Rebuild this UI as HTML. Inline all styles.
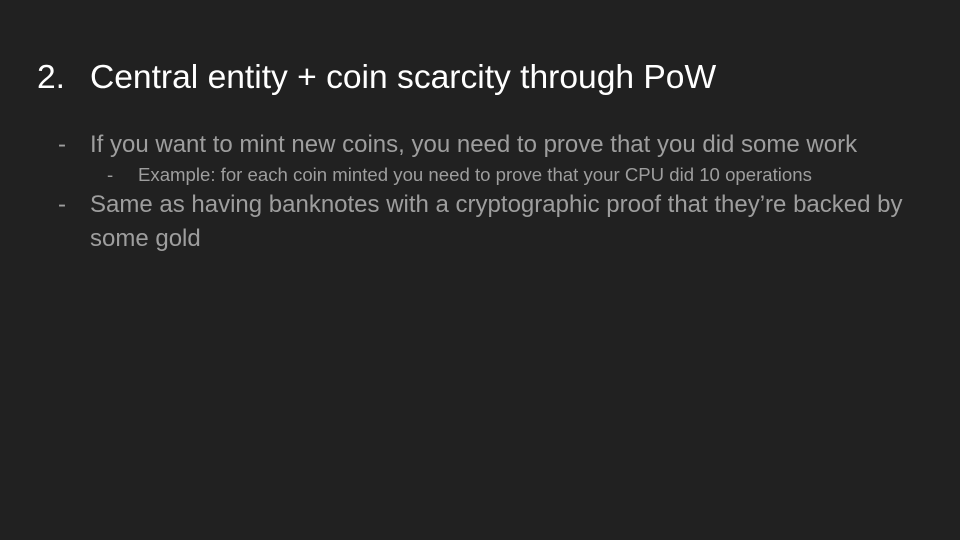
<!DOCTYPE html>
<html><head><style>
body{margin:0;width:960px;height:540px;background:#212121;font-family:"Liberation Sans",sans-serif;position:relative;overflow:hidden}
div{position:absolute;white-space:nowrap}
.t{color:#fff;font-size:33.6px}
.b{color:#9e9e9e;font-size:24px}
.s{color:#9e9e9e;font-size:18.6px}
</style></head><body>
<div class="t" style="left:37px;top:59px">2.</div>
<div class="t" style="left:90px;top:59px">Central entity + coin scarcity through PoW</div>
<div class="b" style="left:58px;top:131px">-</div>
<div class="b" style="left:90px;top:131px">If you want to mint new coins, you need to prove that you did some work</div>
<div class="s" style="left:107px;top:164px">-</div>
<div class="s" style="left:138px;top:164px">Example: for each coin minted you need to prove that your CPU did 10 operations</div>
<div class="b" style="left:58px;top:191px">-</div>
<div class="b" style="left:90px;top:191px">Same as having banknotes with a cryptographic proof that they’re backed by</div>
<div class="b" style="left:90px;top:225px">some gold</div>
</body></html>
